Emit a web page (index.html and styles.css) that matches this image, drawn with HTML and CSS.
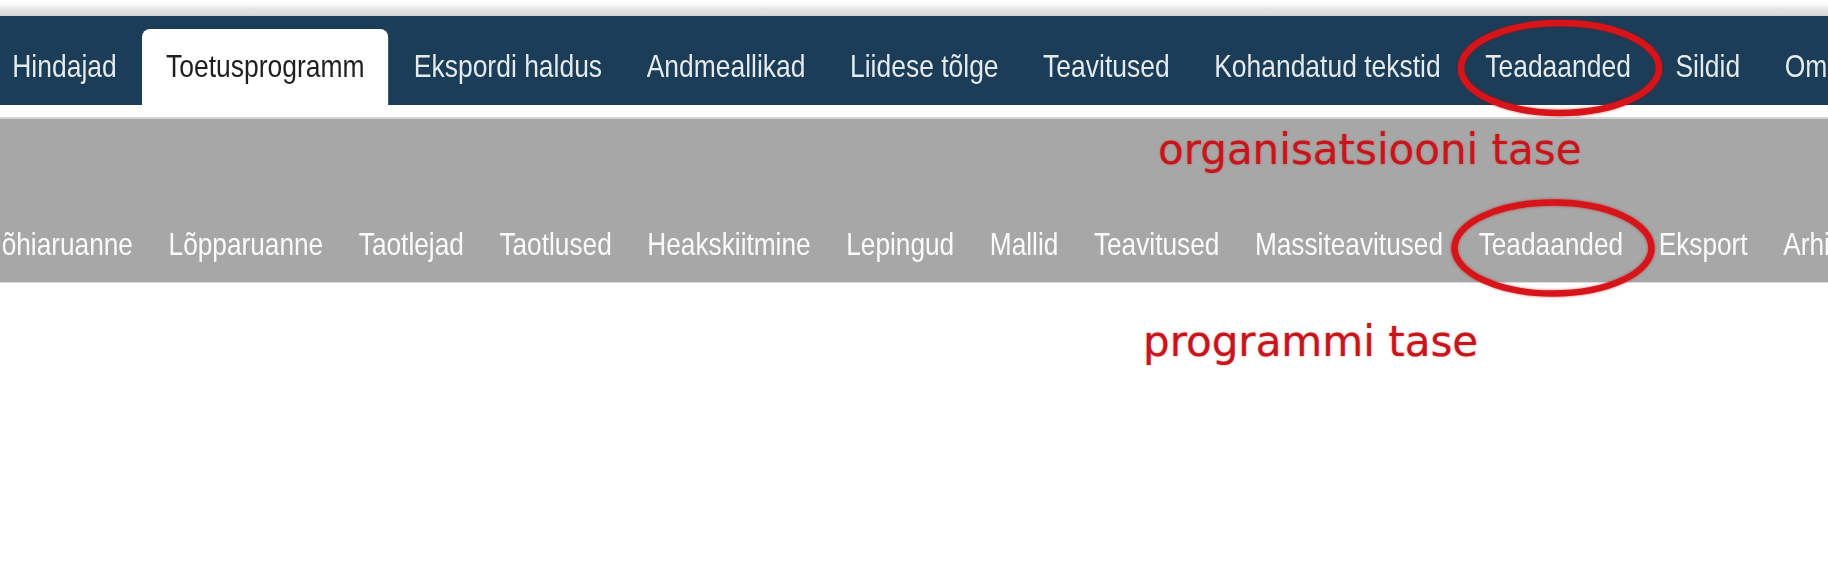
FILE: index.html
```html
<!DOCTYPE html>
<html lang="et">
<head>
<meta charset="utf-8">
<title>Teadaanded</title>
<link rel="stylesheet" href="styles.css">
</head>
<body>
<div class="page">
  <div class="topstrip"></div>
  <nav class="org-nav">
    <ul class="tabs">
      <li class="tab">Hindajad</li>
      <li class="tab active">Toetusprogramm</li>
      <li class="tab">Ekspordi haldus</li>
      <li class="tab">Andmeallikad</li>
      <li class="tab">Liidese tõlge</li>
      <li class="tab">Teavitused</li>
      <li class="tab">Kohandatud tekstid</li>
      <li class="tab">Teadaanded</li>
      <li class="tab">Sildid</li>
      <li class="tab">Omadused</li>
    </ul>
  </nav>
  <nav class="prog-nav">
    <ul class="sub">
      <li class="sub-item">õhiaruanne</li>
      <li class="sub-item">Lõpparuanne</li>
      <li class="sub-item">Taotlejad</li>
      <li class="sub-item">Taotlused</li>
      <li class="sub-item">Heakskiitmine</li>
      <li class="sub-item">Lepingud</li>
      <li class="sub-item">Mallid</li>
      <li class="sub-item">Teavitused</li>
      <li class="sub-item">Massiteavitused</li>
      <li class="sub-item">Teadaanded</li>
      <li class="sub-item">Eksport</li>
      <li class="sub-item">Arhiiv</li>
    </ul>
  </nav>

  <div class="note note-org">organisatsiooni tase</div>
  <div class="note note-prog">programmi tase</div>

  <svg class="ring ring-org" width="210" height="100" viewBox="0 0 210 100" aria-hidden="true">
    <ellipse cx="105" cy="50" rx="99" ry="45" />
  </svg>
  <svg class="ring ring-prog" width="210" height="100" viewBox="0 0 210 100" aria-hidden="true">
    <ellipse cx="105" cy="50" rx="98.5" ry="45.5" />
  </svg>
</div>
</body>
</html>
```

FILE: styles.css
```css
html, body {
  margin: 0;
  padding: 0;
  background: #ffffff;
}

body {
  width: 1828px;
  height: 576px;
  overflow: hidden;
}

.page {
  position: relative;
  width: 1828px;
  height: 576px;
  overflow: hidden;
  font-family: "Liberation Sans", Arial, sans-serif;
}

.topstrip {
  height: 16px;
  background: linear-gradient(to bottom, #ffffff 0, #fbfbfb 4px, #e6e6e6 9px, #d9d9d9 15px, #c9ced2 16px);
}

/* The menu font is a tall, narrow grotesque: Liberation Sans squeezed horizontally. */
.org-nav {
  height: 89px;
  background: #1b3d57;
  display: flex;
  align-items: flex-end;
  overflow: hidden;
}

.tabs {
  display: flex;
  margin: 0 0 0 -10.1px;
  padding: 0;
  list-style: none;
  transform: scaleX(0.84);
  transform-origin: 0 100%;
}

.tab {
  flex-shrink: 0;
  white-space: nowrap;
  padding: 19px 26.5px 21px;
  font-size: 31.5px;
  line-height: 36px;
  color: #e4ebf0;
  text-shadow: 0 0 1px rgba(0, 0, 0, 0.35);
}

.tab.active {
  margin: 0 3.6px;
  padding-left: 28.6px;
  padding-right: 28.6px;
  background: #ffffff;
  color: #1f1f1f;
  border-radius: 9.5px 9.5px 0 0 / 8px 8px 0 0;
  text-shadow: none;
}

.prog-nav {
  margin-top: 12px;
  height: 163px;
  background: #a7a7a7;
  border-top: 2px solid #d4d4d4;
  border-bottom: 1px solid #dcdcdc;
  display: flex;
  align-items: flex-end;
  overflow: hidden;
}

.sub {
  display: flex;
  gap: 43.4px;
  margin: 0;
  padding: 0 0 20px 2px;
  list-style: none;
  transform: scaleX(0.82);
  transform-origin: 0 100%;
}

.sub-item {
  flex-shrink: 0;
  white-space: nowrap;
  font-size: 32px;
  line-height: 36px;
  color: #fbfbfb;
}

.note {
  position: absolute;
  font-family: "DejaVu Sans", "Liberation Sans", sans-serif;
  font-size: 42px;
  line-height: 42px;
  white-space: nowrap;
  color: #c4161c;
  text-shadow: 0 0 2px rgba(230, 20, 20, 0.55);
}

.note-org {
  left: 1158px;
  top: 129px;
}

.note-prog {
  left: 1143px;
  top: 321px;
}

.ring {
  position: absolute;
  overflow: visible;
}

.ring ellipse {
  fill: none;
  stroke: #d5151a;
  stroke-width: 6.5;
  filter: drop-shadow(0 0 1.5px rgba(200, 0, 0, 0.6));
}

.ring-org {
  left: 1455px;
  top: 18px;
}

.ring-prog {
  left: 1448px;
  top: 198px;
}
```
